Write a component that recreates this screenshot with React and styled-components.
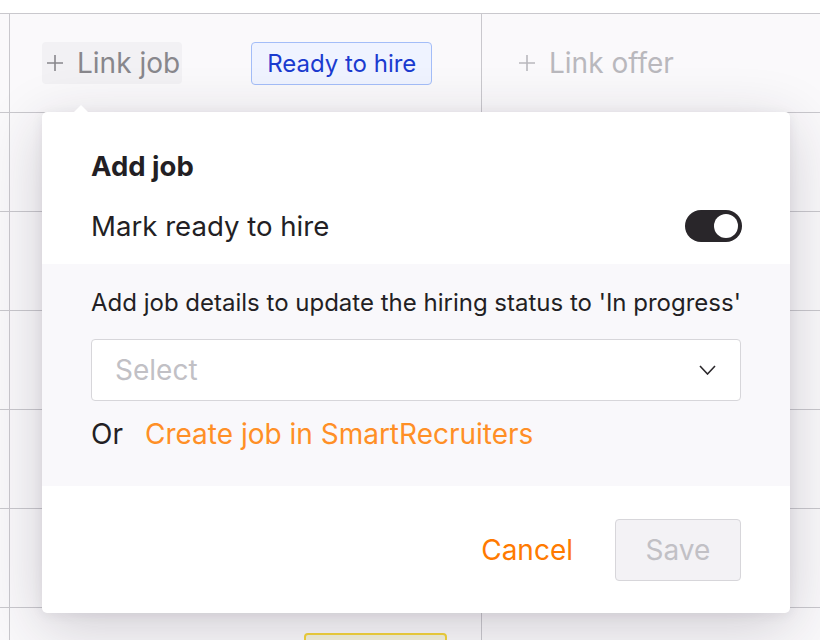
import styled, { createGlobalStyle } from "styled-components";

const GlobalStyle = createGlobalStyle`
  html, body {
    margin: 0;
    padding: 0;
    background: #ffffff;
    font-family: Inter, "Noto Sans", sans-serif;
    color: #231f24;
    overflow: hidden;
  }
  * { box-sizing: border-box; }
`;

const Page = styled.div`
  position: relative;
  width: 820px;
  height: 640px;
  overflow: hidden;
`;

const TopStrip = styled.div`
  height: 14px;
  background: #ffffff;
  border-bottom: 1px solid #c9c8cd;
`;

const Row = styled.div`
  display: grid;
  grid-template-columns: 10px 472px 1fr;
  height: 99px;
  background: #faf9fb;
  border-bottom: 1px solid #c9c8cd;
`;

const Cell = styled.div`
  display: flex;
  align-items: center;
  gap: ${(p) => p.$gap || 0}px;
  padding-left: ${(p) => p.$pad || 0}px;
  border-right: ${(p) => (p.$last ? "none" : "1px solid #c9c8cd")};
`;

const LinkButton = styled.button`
  display: flex;
  align-items: center;
  gap: 13px;
  height: 42px;
  padding: 0 2px 0 4px;
  border: none;
  border-radius: 4px;
  background: ${(p) => (p.$hover ? "#f2f1f4" : "transparent")};
  color: ${(p) => (p.$hover ? "#88878c" : "#b9b8bd")};
  font-family: inherit;
  font-size: 28px;
  cursor: pointer;
`;

const Badge = styled.span`
  display: inline-flex;
  align-items: center;
  height: 43px;
  padding: 0 15px;
  border-radius: 4px;
  border: ${(p) => (p.$yellow ? "2px solid #f5d53a" : "1.5px solid #a3bdf8")};
  background: ${(p) => (p.$yellow ? "#f4f2dc" : "#eff3ff")};
  color: #1b3bcf;
  font-size: 24px;
  align-self: ${(p) => (p.$top ? "flex-start" : "center")};
  margin-top: ${(p) => (p.$top ? "25px" : "0")};
  width: ${(p) => (p.$yellow ? "143px" : "auto")};
`;

const Popover = styled.div`
  position: absolute;
  left: 42px;
  top: 112px;
  width: 748px;
  background: #ffffff;
  border-radius: 5px;
  box-shadow: 0 14px 60px rgba(40, 30, 50, 0.2), 0 2px 12px rgba(40, 30, 50, 0.07);
`;

const Arrow = styled.div`
  position: absolute;
  left: 31px;
  top: -7px;
  width: 0;
  height: 0;
  border-left: 8px solid transparent;
  border-right: 8px solid transparent;
  border-bottom: 8px solid #ffffff;
`;

const Header = styled.div`
  padding: 38px 48px 22px 49px;
  display: flex;
  flex-direction: column;
  gap: 28px;
`;

const Title = styled.div`
  font-size: 27.5px;
  font-weight: 700;
  line-height: 32px;
  color: #231f24;
`;

const ToggleRow = styled.div`
  display: flex;
  align-items: center;
  justify-content: space-between;
  font-size: 27.6px;
  line-height: 32px;
`;

const Toggle = styled.div`
  width: 57px;
  height: 32px;
  border-radius: 16px;
  background: #29262a;
  display: flex;
  align-items: center;
  justify-content: ${(p) => (p.$on ? "flex-end" : "flex-start")};
  padding: 0 4px;
`;

const Knob = styled.div`
  width: 24px;
  height: 24px;
  border-radius: 50%;
  background: #ffffff;
`;

const Body = styled.div`
  background: #f9f8fb;
  padding: 23px 49px 36px 49px;
  display: flex;
  flex-direction: column;
`;

const Hint = styled.div`
  font-size: 24px;
  line-height: 32px;
  color: #231f24;
  white-space: nowrap;
`;

const SelectBox = styled.div`
  margin-top: 20px;
  height: 62px;
  background: #ffffff;
  border: 1.5px solid #d7d6da;
  border-radius: 4px;
  display: flex;
  align-items: center;
  justify-content: space-between;
  padding: 0 24px 0 23px;
  font-size: 28px;
  color: #c1c0c5;
`;

const OrRow = styled.div`
  margin-top: 17px;
  display: flex;
  align-items: center;
  gap: 22px;
  font-size: 28px;
  line-height: 32px;
`;

const OrangeLink = styled.a`
  color: ${(p) => (p.$strong ? "#ff7a00" : "#ff8f26")};
  text-decoration: none;
  cursor: pointer;
  font-size: 28px;
`;

const Footer = styled.div`
  padding: 33px 49px 32px;
  display: flex;
  align-items: center;
  justify-content: flex-end;
  gap: 42px;
`;

const SaveButton = styled.button`
  width: 126px;
  height: 62px;
  border-radius: 4px;
  border: 1.5px solid #d7d6da;
  background: #f3f2f5;
  color: #c1c0c5;
  font-family: inherit;
  font-size: 28px;
`;

function PlusIcon() {
  return (
    <svg width="18" height="18" viewBox="0 0 18 18" fill="none" stroke="currentColor" strokeWidth="1.6">
      <path d="M9 1v16M1 9h16" />
    </svg>
  );
}

function Chevron() {
  return (
    <svg width="17" height="10" viewBox="0 0 17 10" fill="none" stroke="#2b282c" strokeWidth="1.6">
      <path d="M1 1l7.5 8L16 1" />
    </svg>
  );
}

function EmptyRow({ children }) {
  return (
    <Row>
      <Cell />
      <Cell>{children}</Cell>
      <Cell $last />
    </Row>
  );
}

export default function App() {
  return (
    <Page>
      <GlobalStyle />
      <TopStrip />
      <Row>
        <Cell />
        <Cell $pad={32} $gap={69}>
          <LinkButton $hover>
            <PlusIcon />
            Link job
          </LinkButton>
          <Badge>Ready to hire</Badge>
        </Cell>
        <Cell $last $pad={32}>
          <LinkButton>
            <PlusIcon />
            Link offer
          </LinkButton>
        </Cell>
      </Row>
      <EmptyRow />
      <EmptyRow />
      <EmptyRow />
      <EmptyRow />
      <EmptyRow />
      <Row>
        <Cell />
        <Cell $pad={294}>
          <Badge $yellow $top />
        </Cell>
        <Cell $last />
      </Row>

      <Popover>
        <Arrow />
        <Header>
          <Title>Add job</Title>
          <ToggleRow>
            Mark ready to hire
            <Toggle $on>
              <Knob />
            </Toggle>
          </ToggleRow>
        </Header>
        <Body>
          <Hint>Add job details to update the hiring status to 'In progress'</Hint>
          <SelectBox>
            Select
            <Chevron />
          </SelectBox>
          <OrRow>
            Or
            <OrangeLink>Create job in SmartRecruiters</OrangeLink>
          </OrRow>
        </Body>
        <Footer>
          <OrangeLink $strong>Cancel</OrangeLink>
          <SaveButton disabled>Save</SaveButton>
        </Footer>
      </Popover>
    </Page>
  );
}
